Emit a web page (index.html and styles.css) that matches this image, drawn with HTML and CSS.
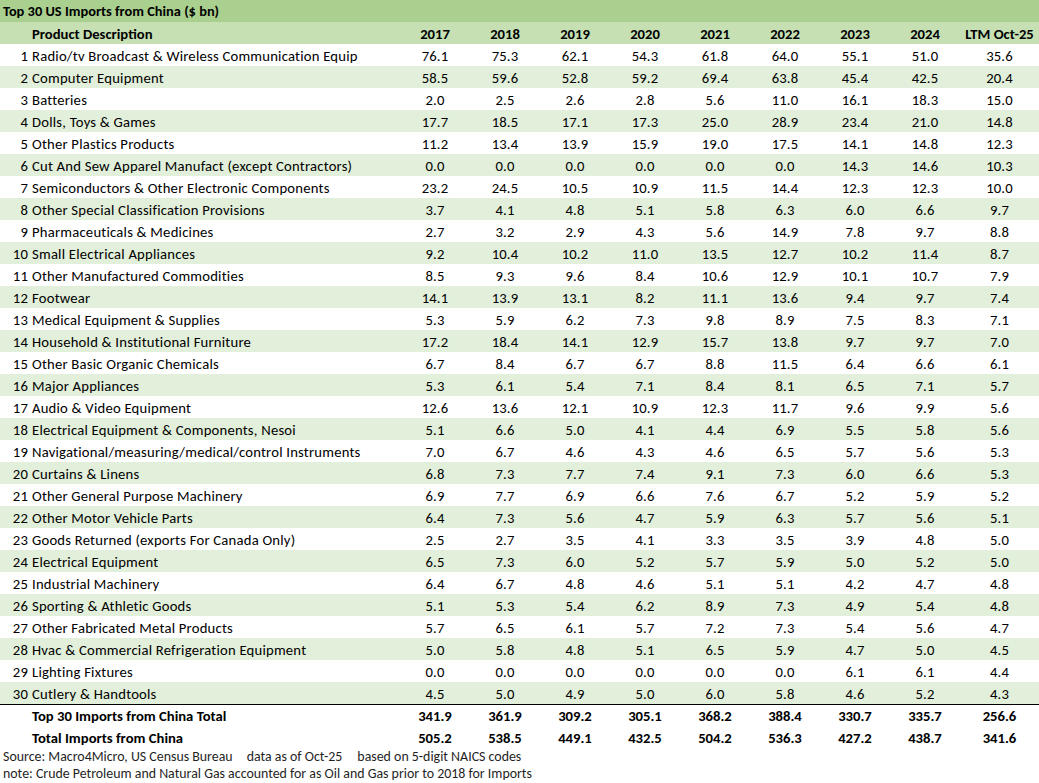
FILE: index.html
```html
<!DOCTYPE html>
<html>
<head>
<meta charset="utf-8">
<link rel="stylesheet" href="styles.css">
</head>
<body>
<div class="sheet">
  <div class="title">Top 30 US Imports from China ($ bn)</div>
  <table class="data">
    <colgroup>
      <col class="c-num"><col class="c-desc">
      <col class="c-yr"><col class="c-yr"><col class="c-yr"><col class="c-yr"><col class="c-yr"><col class="c-yr"><col class="c-yr"><col class="c-yr">
      <col class="c-ltm">
    </colgroup>
    <thead>
      <tr><th></th><th class="desc">Product Description</th><th>2017</th><th>2018</th><th>2019</th><th>2020</th><th>2021</th><th>2022</th><th>2023</th><th>2024</th><th>LTM Oct-25</th></tr>
    </thead>
    <tbody>
      <tr><td class="n">1</td><td class="desc">Radio/tv Broadcast &amp; Wireless Communication Equip</td><td>76.1</td><td>75.3</td><td>62.1</td><td>54.3</td><td>61.8</td><td>64.0</td><td>55.1</td><td>51.0</td><td>35.6</td></tr>
      <tr><td class="n">2</td><td class="desc">Computer Equipment</td><td>58.5</td><td>59.6</td><td>52.8</td><td>59.2</td><td>69.4</td><td>63.8</td><td>45.4</td><td>42.5</td><td>20.4</td></tr>
      <tr><td class="n">3</td><td class="desc">Batteries</td><td>2.0</td><td>2.5</td><td>2.6</td><td>2.8</td><td>5.6</td><td>11.0</td><td>16.1</td><td>18.3</td><td>15.0</td></tr>
      <tr><td class="n">4</td><td class="desc">Dolls, Toys &amp; Games</td><td>17.7</td><td>18.5</td><td>17.1</td><td>17.3</td><td>25.0</td><td>28.9</td><td>23.4</td><td>21.0</td><td>14.8</td></tr>
      <tr><td class="n">5</td><td class="desc">Other Plastics Products</td><td>11.2</td><td>13.4</td><td>13.9</td><td>15.9</td><td>19.0</td><td>17.5</td><td>14.1</td><td>14.8</td><td>12.3</td></tr>
      <tr><td class="n">6</td><td class="desc">Cut And Sew Apparel Manufact (except Contractors)</td><td>0.0</td><td>0.0</td><td>0.0</td><td>0.0</td><td>0.0</td><td>0.0</td><td>14.3</td><td>14.6</td><td>10.3</td></tr>
      <tr><td class="n">7</td><td class="desc">Semiconductors &amp; Other Electronic Components</td><td>23.2</td><td>24.5</td><td>10.5</td><td>10.9</td><td>11.5</td><td>14.4</td><td>12.3</td><td>12.3</td><td>10.0</td></tr>
      <tr><td class="n">8</td><td class="desc">Other Special Classification Provisions</td><td>3.7</td><td>4.1</td><td>4.8</td><td>5.1</td><td>5.8</td><td>6.3</td><td>6.0</td><td>6.6</td><td>9.7</td></tr>
      <tr><td class="n">9</td><td class="desc">Pharmaceuticals &amp; Medicines</td><td>2.7</td><td>3.2</td><td>2.9</td><td>4.3</td><td>5.6</td><td>14.9</td><td>7.8</td><td>9.7</td><td>8.8</td></tr>
      <tr><td class="n">10</td><td class="desc">Small Electrical Appliances</td><td>9.2</td><td>10.4</td><td>10.2</td><td>11.0</td><td>13.5</td><td>12.7</td><td>10.2</td><td>11.4</td><td>8.7</td></tr>
      <tr><td class="n">11</td><td class="desc">Other Manufactured Commodities</td><td>8.5</td><td>9.3</td><td>9.6</td><td>8.4</td><td>10.6</td><td>12.9</td><td>10.1</td><td>10.7</td><td>7.9</td></tr>
      <tr><td class="n">12</td><td class="desc">Footwear</td><td>14.1</td><td>13.9</td><td>13.1</td><td>8.2</td><td>11.1</td><td>13.6</td><td>9.4</td><td>9.7</td><td>7.4</td></tr>
      <tr><td class="n">13</td><td class="desc">Medical Equipment &amp; Supplies</td><td>5.3</td><td>5.9</td><td>6.2</td><td>7.3</td><td>9.8</td><td>8.9</td><td>7.5</td><td>8.3</td><td>7.1</td></tr>
      <tr><td class="n">14</td><td class="desc">Household &amp; Institutional Furniture</td><td>17.2</td><td>18.4</td><td>14.1</td><td>12.9</td><td>15.7</td><td>13.8</td><td>9.7</td><td>9.7</td><td>7.0</td></tr>
      <tr><td class="n">15</td><td class="desc">Other Basic Organic Chemicals</td><td>6.7</td><td>8.4</td><td>6.7</td><td>6.7</td><td>8.8</td><td>11.5</td><td>6.4</td><td>6.6</td><td>6.1</td></tr>
      <tr><td class="n">16</td><td class="desc">Major Appliances</td><td>5.3</td><td>6.1</td><td>5.4</td><td>7.1</td><td>8.4</td><td>8.1</td><td>6.5</td><td>7.1</td><td>5.7</td></tr>
      <tr><td class="n">17</td><td class="desc">Audio &amp; Video Equipment</td><td>12.6</td><td>13.6</td><td>12.1</td><td>10.9</td><td>12.3</td><td>11.7</td><td>9.6</td><td>9.9</td><td>5.6</td></tr>
      <tr><td class="n">18</td><td class="desc">Electrical Equipment &amp; Components, Nesoi</td><td>5.1</td><td>6.6</td><td>5.0</td><td>4.1</td><td>4.4</td><td>6.9</td><td>5.5</td><td>5.8</td><td>5.6</td></tr>
      <tr><td class="n">19</td><td class="desc">Navigational/measuring/medical/control Instruments</td><td>7.0</td><td>6.7</td><td>4.6</td><td>4.3</td><td>4.6</td><td>6.5</td><td>5.7</td><td>5.6</td><td>5.3</td></tr>
      <tr><td class="n">20</td><td class="desc">Curtains &amp; Linens</td><td>6.8</td><td>7.3</td><td>7.7</td><td>7.4</td><td>9.1</td><td>7.3</td><td>6.0</td><td>6.6</td><td>5.3</td></tr>
      <tr><td class="n">21</td><td class="desc">Other General Purpose Machinery</td><td>6.9</td><td>7.7</td><td>6.9</td><td>6.6</td><td>7.6</td><td>6.7</td><td>5.2</td><td>5.9</td><td>5.2</td></tr>
      <tr><td class="n">22</td><td class="desc">Other Motor Vehicle Parts</td><td>6.4</td><td>7.3</td><td>5.6</td><td>4.7</td><td>5.9</td><td>6.3</td><td>5.7</td><td>5.6</td><td>5.1</td></tr>
      <tr><td class="n">23</td><td class="desc">Goods Returned (exports For Canada Only)</td><td>2.5</td><td>2.7</td><td>3.5</td><td>4.1</td><td>3.3</td><td>3.5</td><td>3.9</td><td>4.8</td><td>5.0</td></tr>
      <tr><td class="n">24</td><td class="desc">Electrical Equipment</td><td>6.5</td><td>7.3</td><td>6.0</td><td>5.2</td><td>5.7</td><td>5.9</td><td>5.0</td><td>5.2</td><td>5.0</td></tr>
      <tr><td class="n">25</td><td class="desc">Industrial Machinery</td><td>6.4</td><td>6.7</td><td>4.8</td><td>4.6</td><td>5.1</td><td>5.1</td><td>4.2</td><td>4.7</td><td>4.8</td></tr>
      <tr><td class="n">26</td><td class="desc">Sporting &amp; Athletic Goods</td><td>5.1</td><td>5.3</td><td>5.4</td><td>6.2</td><td>8.9</td><td>7.3</td><td>4.9</td><td>5.4</td><td>4.8</td></tr>
      <tr><td class="n">27</td><td class="desc">Other Fabricated Metal Products</td><td>5.7</td><td>6.5</td><td>6.1</td><td>5.7</td><td>7.2</td><td>7.3</td><td>5.4</td><td>5.6</td><td>4.7</td></tr>
      <tr><td class="n">28</td><td class="desc">Hvac &amp; Commercial Refrigeration Equipment</td><td>5.0</td><td>5.8</td><td>4.8</td><td>5.1</td><td>6.5</td><td>5.9</td><td>4.7</td><td>5.0</td><td>4.5</td></tr>
      <tr><td class="n">29</td><td class="desc">Lighting Fixtures</td><td>0.0</td><td>0.0</td><td>0.0</td><td>0.0</td><td>0.0</td><td>0.0</td><td>6.1</td><td>6.1</td><td>4.4</td></tr>
      <tr><td class="n">30</td><td class="desc">Cutlery &amp; Handtools</td><td>4.5</td><td>5.0</td><td>4.9</td><td>5.0</td><td>6.0</td><td>5.8</td><td>4.6</td><td>5.2</td><td>4.3</td></tr>
    </tbody>
    <tfoot>
      <tr class="first"><td></td><td class="desc">Top 30 Imports from China Total</td><td>341.9</td><td>361.9</td><td>309.2</td><td>305.1</td><td>368.2</td><td>388.4</td><td>330.7</td><td>335.7</td><td>256.6</td></tr>
      <tr><td></td><td class="desc">Total Imports from China</td><td>505.2</td><td>538.5</td><td>449.1</td><td>432.5</td><td>504.2</td><td>536.3</td><td>427.2</td><td>438.7</td><td>341.6</td></tr>
    </tfoot>
  </table>
  <div class="notes">
    <div class="line"><span class="src">Source: Macro4Micro, US Census Bureau</span><span class="asof">data as of Oct-25</span><span>based on 5-digit NAICS codes</span></div>
    <div class="line">note: Crude Petroleum and Natural Gas accounted for as Oil and Gas prior to 2018 for Imports</div>
  </div>
</div>
</body>
</html>
```

FILE: styles.css
```css
html, body {
  margin: 0;
  padding: 0;
  background: #ffffff;
}
body {
  font-family: Calibri, Carlito, "Liberation Sans", Arial, sans-serif;
  font-size: 14.667px;
  color: #000000;
}
.sheet {
  width: 1039px;
}
.title {
  height: 22px;
  line-height: 22px;
  padding-left: 3px;
  background: #a9d08e;
  font-weight: bold;
  font-size: 14.4px;
}
.data {
  width: 1039px;
  border-collapse: collapse;
  table-layout: fixed;
}
.c-num { width: 28px; }
.c-desc { width: 372px; }
.c-yr { width: 70px; }
.c-ltm { width: 79px; }
.data th,
.data td {
  height: 20px;
  padding: 2px 0 0 0;
  line-height: 20px;
  text-align: center;
  white-space: nowrap;
  overflow: hidden;
}
.data thead tr {
  background: #c6e0b4;
}
.data th {
  font-weight: bold;
}
.data .desc {
  text-align: left;
  padding-left: 4px;
}
.data tbody .desc {
  letter-spacing: 0.22px;
}
.data tbody td {
  letter-spacing: 0.15px;
}
.data .n {
  text-align: right;
}
.data tbody tr:nth-child(even) {
  background: #e2efda;
}
.data tfoot td {
  font-weight: bold;
}
.data tfoot tr.first td {
  border-top: 1px solid #000000;
  height: 20px;
  padding-top: 1px;
}
.notes {
  padding-left: 3px;
  color: #1f1f1f;
  font-size: 13.9px;
}
.notes .line {
  height: 17px;
  line-height: 17px;
}
.notes .src {
  margin-right: 14px;
}
.notes .asof {
  margin-right: 15px;
}
```
